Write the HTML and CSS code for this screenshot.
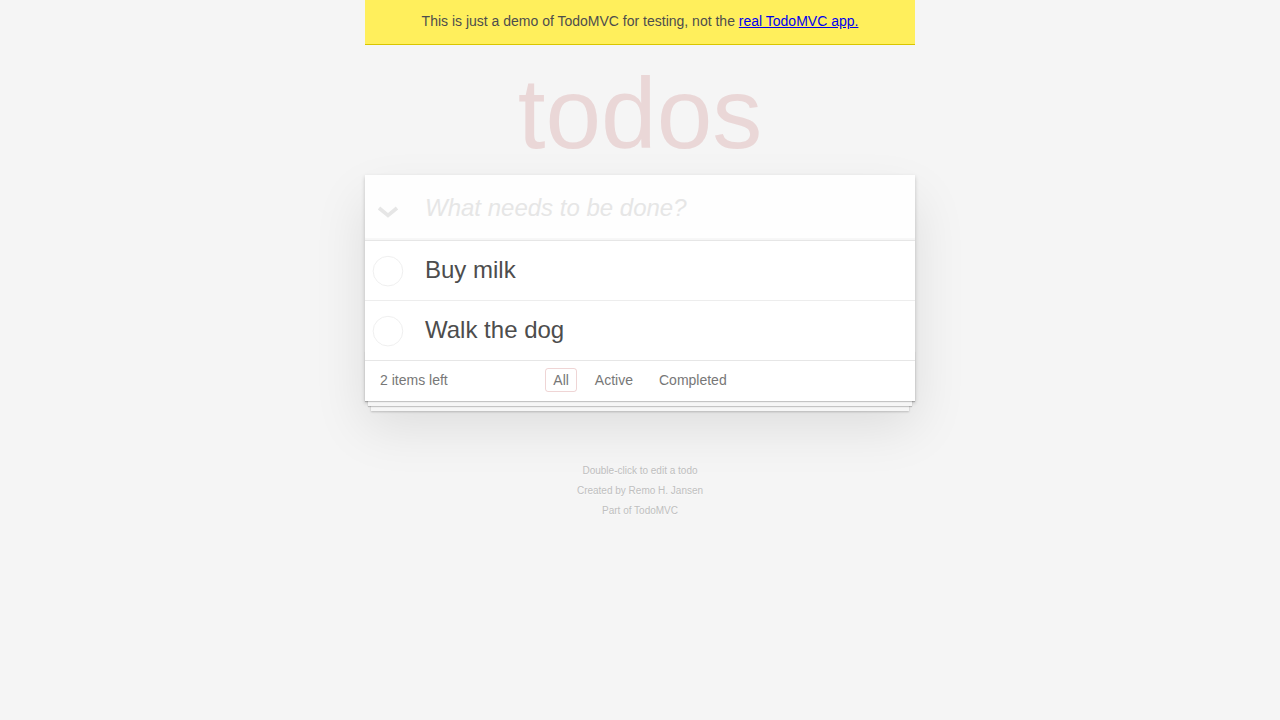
FILE: index.html
```html
<!DOCTYPE html>
<html lang="en">
<head>
<meta charset="utf-8">
<title>TodoMVC</title>
<link rel="stylesheet" href="styles.css">
</head>
<body>
<div class="page">
<div class="banner">This is just a demo of TodoMVC for testing, not the <a href="#" class="banner-link">real TodoMVC app.</a></div>
<section class="todoapp-wrap">
  <h1 class="title">todos</h1>
  <div class="todoapp">
    <div class="header">
      <span class="toggle-all">
        <svg width="24" height="14" viewBox="0 0 24 14"><polyline points="3,3 12,10.5 21,3" fill="none" stroke="#e6e6e6" stroke-width="3.6" stroke-linejoin="miter"/></svg>
      </span>
      <input class="new-todo" placeholder="What needs to be done?">
    </div>
    <ul class="todo-list">
      <li class="todo">
        <span class="toggle"><svg width="40" height="40" viewBox="-10 -18 100 135"><circle cx="50" cy="50" r="50" fill="none" stroke="#ededed" stroke-width="3"/></svg></span>
        <label class="todo-label">Buy milk</label>
      </li>
      <li class="todo">
        <span class="toggle"><svg width="40" height="40" viewBox="-10 -18 100 135"><circle cx="50" cy="50" r="50" fill="none" stroke="#ededed" stroke-width="3"/></svg></span>
        <label class="todo-label">Walk the dog</label>
      </li>
    </ul>
    <footer class="footer">
      <span class="todo-count"><strong class="count-num">2</strong> items left</span>
      <ul class="filters">
        <li class="filter-item"><a href="#" class="filter selected">All</a></li>
        <li class="filter-item"><a href="#" class="filter">Active</a></li>
        <li class="filter-item"><a href="#" class="filter">Completed</a></li>
      </ul>
      <span class="footer-spacer"></span>
    </footer>
  </div>
</section>
<footer class="info">
  <p class="info-line">Double-click to edit a todo</p>
  <p class="info-line">Created by Remo H. Jansen</p>
  <p class="info-line">Part of TodoMVC</p>
</footer>
</div>
</body>
</html>
```
FILE: styles.css
```css
html {
  margin: 0;
  padding: 0;
  background: #f5f5f5;
}
body {
  font: 14px "Liberation Sans", Arial, sans-serif;
  line-height: 1.4em;
  color: #4d4d4d;
  margin: 0;
  padding: 0;
  font-weight: 300;
}
.page {
  width: 670px;
  box-sizing: border-box;
  padding: 0 60px;
  margin: 0 auto;
}
.banner {
  background: #ffef5c;
  border-bottom: 1px solid #d9c600;
  text-align: center;
  padding: 11px 0 13px;
  line-height: 20px;
  font-size: 14px;
  color: #4d4d4d;
}
.banner-link {
  color: #0000ee;
  text-decoration: underline;
}
.title {
  margin: 0;
  height: 130px;
  line-height: 137px;
  font-size: 100px;
  font-weight: 100;
  text-align: center;
  color: rgba(175, 47, 47, 0.15);
}
.todoapp {
  background: #fff;
  margin: 0 0 40px 0;
  position: relative;
  box-shadow: 0 2px 4px 0 rgba(0, 0, 0, 0.2), 0 25px 50px 0 rgba(0, 0, 0, 0.1);
}
.header {
  display: flex;
  align-items: center;
  height: 65px;
  background: rgba(0, 0, 0, 0.003);
  box-shadow: inset 0 -2px 1px rgba(0, 0, 0, 0.03);
}
.toggle-all {
  width: 60px;
  flex: 0 0 60px;
  display: flex;
  justify-content: flex-start;
  padding-left: 11px;
  box-sizing: border-box;
  padding-top: 9px;
}
.toggle-all svg {
  display: block;
}
.new-todo {
  flex: 1;
  border: none;
  outline: none;
  background: transparent;
  font-family: inherit;
  font-size: 24px;
  font-weight: 300;
  line-height: 33.6px;
  padding: 0 16px 0 0;
  color: #4d4d4d;
}
.new-todo::placeholder {
  font-style: italic;
  font-weight: 300;
  color: #e6e6e6;
}
.todo-list {
  margin: 0;
  padding: 0;
  list-style: none;
  border-top: 1px solid #e6e6e6;
}
.todo {
  display: flex;
  align-items: center;
  border-bottom: 1px solid #ededed;
  font-size: 24px;
}
.todo:last-child {
  border-bottom: none;
}
.toggle {
  flex: 0 0 60px;
  display: flex;
  align-items: center;
}
.toggle svg {
  display: block;
}
.todo-label {
  display: block;
  padding: 14px 15px 16px 0;
  line-height: 29px;
  color: #4d4d4d;
  font-weight: 400;
}
.footer {
  position: relative;
  color: #777;
  padding: 10px 15px;
  height: 20px;
  border-top: 1px solid #e6e6e6;
  display: grid;
  grid-template-columns: 1fr auto 1fr;
  grid-template-rows: 20px;
  align-items: center;
  line-height: 20px;
}
.footer::before {
  content: "";
  position: absolute;
  right: 0;
  bottom: 0;
  left: 0;
  height: 50px;
  overflow: hidden;
  box-shadow: 0 1px 1px rgba(0, 0, 0, 0.2),
              0 8px 0 -3px #f6f6f6,
              0 9px 1px -3px rgba(0, 0, 0, 0.2),
              0 16px 0 -6px #f6f6f6,
              0 17px 2px -6px rgba(0, 0, 0, 0.2);
  pointer-events: none;
}
.todo-count {
  position: relative;
  text-align: left;
  align-self: start;
  line-height: 18px;
}
.count-num {
  font-weight: 300;
}
.filters {
  position: relative;
  margin: -2px 0 0;
  padding: 0;
  list-style: none;
  display: flex;
  gap: 4px;
  align-self: center;
}
.filter-item {
  display: block;
}
.filter {
  display: inline-block;
  vertical-align: top;
  color: inherit;
  margin: 3px;
  padding: 3px 7px;
  line-height: 16px;
  text-decoration: none;
  border: 1px solid transparent;
  border-radius: 3px;
}
.filter.selected {
  border-color: rgba(175, 47, 47, 0.2);
}
.info {
  margin: 65px auto 0;
  color: #bfbfbf;
  font-size: 10px;
  text-shadow: 0 1px 0 rgba(255, 255, 255, 0.5);
  text-align: center;
}
.info-line {
  line-height: 1;
  margin: 10px 0;
}
```
